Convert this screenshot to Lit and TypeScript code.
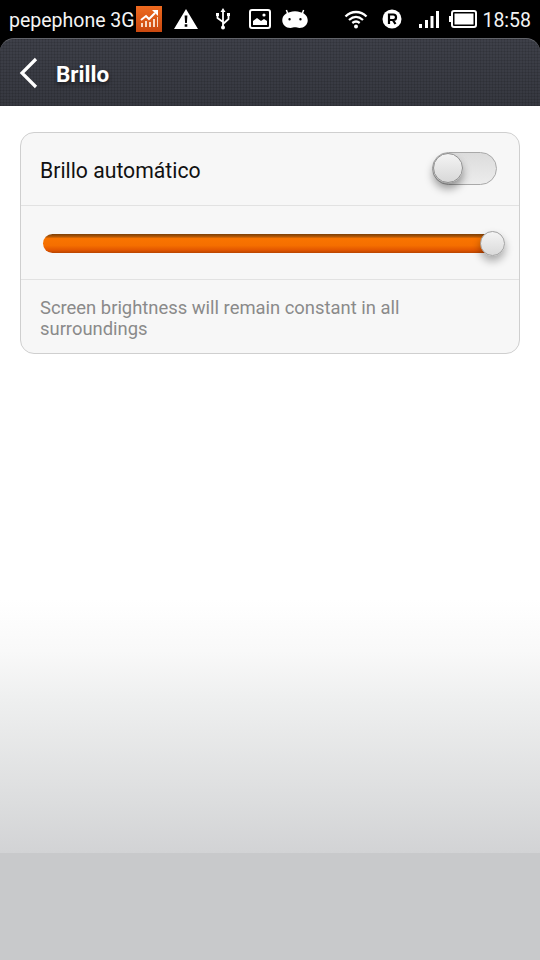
import { LitElement, html, css } from "lit";
import { customElement } from "lit/decorators.js";

@customElement("app-root")
export class AppRoot extends LitElement {
  static styles = css`
    :host { display: block; width: 540px; height: 960px; font-family: Roboto, "Liberation Sans", sans-serif; background: #fff; overflow: hidden; }
    .page { display: flex; flex-direction: column; height: 960px; }
    .status { height: 38px; background: #000; color: #f4f4f4; display: flex; align-items: center; padding: 0 9px; box-sizing: border-box; flex: none; font-size: 19.5px; }
    .status svg { display: block; flex: none; }
    .carrier { width: 131px; white-space: nowrap; margin-top: 2px; }
    .clock { margin-left: auto; margin-top: 2px; font-size: 19.5px; }
    .ico1 { margin-right: 12px; }
    .warn { margin-right: 17px; }
    .usb { margin-right: 18px; }
    .pic { margin-right: 11px; }
    .droid { margin-right: 36px; }
    .wifi { margin-right: 14px; }
    .reg { margin-right: 16px; }
    .sig { margin-right: 9px; }
    .bat { margin-right: 5px; }
    .header-wrap { background: #000; flex: none; }
    .header { height: 68px; box-sizing: border-box; border-radius: 14px 14px 0 0; border-top: 1px solid #62646a;
      background-color: #383a43;
      background-image: repeating-linear-gradient(90deg, rgba(0,0,0,.1) 0 1px, transparent 1px 3px), repeating-linear-gradient(0deg, rgba(0,0,0,.1) 0 1px, transparent 1px 3px), linear-gradient(#3e4049, #363840);
      display: flex; align-items: center; padding: 0 0 0 19px; gap: 17px; color: #fff; }
    .title { font-size: 22.5px; font-weight: 700; text-shadow: 0 2px 4px rgba(0,0,0,.6); margin-top: 2px; }
    .main { flex: 1; padding: 26px 20px 0; background: #fff; }
    .card { border: 1px solid #cfcfcf; border-radius: 14px; background: #f7f7f7; height: 222px; box-sizing: border-box; display: flex; flex-direction: column; }
    .row { height: 73px; flex: none; box-sizing: border-box; border-bottom: 1px solid #e2e2e2; display: flex; align-items: center; }
    .auto { padding: 0 22px 0 19px; justify-content: space-between; font-size: 21.2px; color: #111; }
    .auto span { margin-top: 2px; }
    .slider { height: 74px; padding: 0 20px 0 22px; }
    .toggle { position: relative; width: 65px; height: 33px; box-sizing: border-box; border: 1px solid #a9a9a9; border-radius: 17px; background: linear-gradient(#dcdcdc, #ececec); margin-top: -1px; }
    .knob { position: absolute; left: 0; top: 0; width: 30px; height: 30px; box-sizing: border-box; border-radius: 50%; border: 1px solid #8f8f8f;
      background: linear-gradient(#f4f4f4, #d8d8d8); box-shadow: 0 6px 8px rgba(0,0,0,.38); }
    .track { position: relative; flex: 1; height: 19px; border-radius: 10px; margin-top: 2px;
      background: linear-gradient(#7d3f05 0, #a85206 12%, #f97400 24%, #f56f00 60%, #e25600 85%, #b84500 100%); }
    .thumb { position: absolute; right: -6px; top: -3px; width: 25px; height: 25px; box-sizing: border-box; border-radius: 50%; border: 1px solid #a0a0a0;
      background: linear-gradient(#f4f4f4, #dadada); box-shadow: 0 5px 9px rgba(0,0,0,.32); }
    .note { padding: 17px 19px 0; font-size: 18.4px; line-height: 21px; color: #8a8a8a; width: 380px; }
    .fade { height: 253px; flex: none; background: linear-gradient(#fff 0, #f9f9f9 20%, #eeefef 40%, #dcddde 80%, #d2d3d5 100%); }
    .foot { height: 107px; flex: none; background: #c8c9cb; }
  `;

  private statusIcons() {
    return html`
      <svg class="ico1" width="26" height="26" viewBox="0 0 26 26">
        <defs><linearGradient id="og" x1="0" y1="0" x2="0" y2="1"><stop offset="0" stop-color="#ee6a1f"/><stop offset="1" stop-color="#c9480f"/></linearGradient></defs>
        <rect width="26" height="26" fill="url(#og)"/>
        <path d="M5 21v-4h2v4zM9 21v-6h2v6zM13 21v-5h2v5zM17 21v-8h2v8zM21 21v-10h1v10z" fill="#f7d9c4"/>
        <path d="M5 14l5-4 3 3 6-6" fill="none" stroke="#fff" stroke-width="2"/>
        <path d="M16 4h6v6z" fill="#fff"/>
      </svg>
      <svg class="warn" width="24" height="22" viewBox="0 0 24 22">
        <path fill-rule="evenodd" d="M12 1L24 21H0zM10.600 7.500l.5 7.500h1.800l.5-7.500zM10.700 16.200v2.600h2.600v-2.600z" fill="#fff"/>
      </svg>
      <svg class="usb" width="16" height="22" viewBox="0 0 16 22">
        <path d="M8 2v18M8 14L2.500 10V7M8 16l5.500-5V7" fill="none" stroke="#fff" stroke-width="1.800"/>
        <path d="M8 0l2.500 4h-5z" fill="#fff"/><circle cx="8" cy="19.500" r="2" fill="#fff"/>
        <rect x="1" y="5" width="3" height="3" fill="#fff"/><rect x="12" y="5" width="3" height="3" fill="#fff"/>
      </svg>
      <svg class="pic" width="22" height="20" viewBox="0 0 22 20">
        <rect x="1" y="1" width="20" height="18" rx="2" fill="none" stroke="#fff" stroke-width="2"/>
        <path d="M4 16v-4l4-3 4 3 3-2 3 2v4z" fill="#fff"/><circle cx="15" cy="6" r="1.600" fill="#fff"/>
      </svg>
      <svg class="droid" width="26" height="20" viewBox="0 0 28 22">
        <path d="M6 5L4.500 1M22 5l1.500-4" stroke="#fff" stroke-width="1.600"/>
        <path fill-rule="evenodd" d="M8 3.500c4-1.200 8-1.200 12 0 5 1 8 4.500 8 9 0 5-4 8.500-9 8.500-2 0-3.500-.8-5-.8s-3 .8-5 .8c-5 0-9-3.500-9-8.500 0-4.500 3-8 8-9zM8 10a1.300 1.300 0 100 2.600 1.300 1.300 0 000-2.600zM20 10a1.300 1.300 0 100 2.600 1.300 1.300 0 000-2.600z" fill="#fff"/>
      </svg>
      <svg class="wifi" width="24" height="20" viewBox="0 0 24 20">
        <path d="M1.500 7.500C7.500 1.500 16.500 1.500 22.500 7.500M5 11c4.500-4 9.500-4 14 0M8.300 14c2.500-2 5-2 7.400 0" fill="none" stroke="#fff" stroke-width="2.300"/>
        <circle cx="12" cy="17.500" r="2" fill="#fff"/>
      </svg>
      <svg class="reg" width="20" height="20" viewBox="0 0 20 20">
        <circle cx="10" cy="10" r="9.500" fill="#fff"/>
        <path d="M7 15V5.500h4.300a2.700 2.700 0 010 5.500H7M10.800 11l2.700 4" fill="none" stroke="#000" stroke-width="2.200"/>
      </svg>
      <svg class="sig" width="22" height="20" viewBox="0 0 22 20">
        <rect x="1" y="15" width="3" height="4" fill="#fff"/>
        <rect x="7" y="11" width="3" height="8" fill="#fff"/>
        <rect x="12.500" y="7" width="3" height="12" fill="#fff"/>
        <rect x="18" y="2" width="3" height="17" fill="#fff"/>
      </svg>
      <svg class="bat" width="28" height="18" viewBox="0 0 28 18">
        <rect x="0" y="6" width="2" height="6" fill="#fff"/>
        <rect x="3" y="1" width="24" height="16" rx="2" fill="none" stroke="#fff" stroke-width="2"/>
        <rect x="5.500" y="3.500" width="19" height="11" fill="#fff"/>
      </svg>
    `;
  }

  render() {
    return html`
      <div class="page">
        <div class="status">
          <span class="carrier">pepephone 3G</span>
          ${this.statusIcons()}
          <span class="clock">18:58</span>
        </div>
        <div class="header-wrap">
          <div class="header">
            <svg width="20" height="32" viewBox="0 0 20 32"><path d="M17 2L3 16l14 14" fill="none" stroke="#fff" stroke-width="3.200"/></svg>
            <span class="title">Brillo</span>
          </div>
        </div>
        <div class="main">
          <div class="card">
            <div class="row auto"><span>Brillo automático</span><div class="toggle"><div class="knob"></div></div></div>
            <div class="row slider"><div class="track"><div class="thumb"></div></div></div>
            <div class="note">Screen brightness will remain constant in all surroundings</div>
          </div>
        </div>
        <div class="fade"></div>
        <div class="foot"></div>
      </div>
    `;
  }
}
